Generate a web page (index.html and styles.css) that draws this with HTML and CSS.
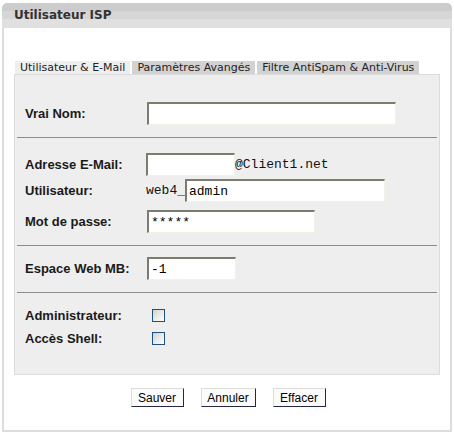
FILE: index.html
```html
<!DOCTYPE html>
<html lang="fr">
<head>
  <meta charset="UTF-8" />
  <title>Utilisateur ISP</title>
  <link rel="stylesheet" href="styles.css">
</head>
<body>
  <div class="box">
    <div class="box-title">Utilisateur ISP</div>
    <div class="box-body">
      <form class="isp-form" onsubmit="return false">
        <!-- Onglets -->
        <ul class="tabs">
          <li class="tab active">Utilisateur &amp; E-Mail</li>
          <li class="tab">Paramètres Avangés</li>
          <li class="tab">Filtre AntiSpam &amp; Anti-Virus</li>
        </ul>

        <div class="tab-panel">
          <div class="section section-name">
            <div class="field">
              <label>Vrai Nom:</label>
              <input type="text" class="in-name">
            </div>
          </div>
          <hr>
          <div class="section section-mail">
            <div class="field">
              <label>Adresse E-Mail:</label>
              <span class="inline"><input type="text" class="in-mail"><span class="mono">@Client1.net</span></span>
            </div>
            <div class="field field-user">
              <label>Utilisateur:</label>
              <span class="inline"><span class="mono">web4_</span><input type="text" class="in-user" value="admin"></span>
            </div>
            <div class="field field-pass">
              <label>Mot de passe:</label>
              <input type="text" class="in-pass" value="*****">
            </div>
          </div>
          <hr>
          <div class="section section-web">
            <div class="field">
              <label>Espace Web MB:</label>
              <input type="text" class="in-web" value="-1">
            </div>
          </div>
          <hr>
          <div class="section section-flags">
            <div class="field">
              <label>Administrateur:</label>
              <input type="checkbox" class="check">
            </div>
            <div class="field">
              <label>Accès Shell:</label>
              <input type="checkbox" class="check">
            </div>
          </div>
        </div>

        <div class="actions">
          <button class="btn btn-save">Sauver</button>
          <button class="btn btn-cancel">Annuler</button>
          <button class="btn btn-clear">Effacer</button>
        </div>
      </form>
    </div>
  </div>
</body>
</html>
```

FILE: styles.css
```css
* {
  box-sizing: border-box;
}

body {
  margin: 0;
  background: #fff;
  font-family: 'Liberation Sans', Arial, sans-serif;
  color: #222;
}

.box {
  width: 450px;
  margin: 3px 0 0 2px;
}

/* Title bar */
.box-title {
  height: 25px;
  padding: 6px 0 0 12px;
  border-radius: 5px 5px 0 0;
  background: linear-gradient(to bottom, #cccccc 0, #cccccc 8px, #d6d6d6 8px, #d6d6d6 16px, #e0e0e0 16px);
  font-family: 'DejaVu Sans', Verdana, sans-serif;
  font-size: 12px;
  font-weight: bold;
  line-height: 13px;
  color: #333;
}

.box-body {
  height: 404px;
  border: 2px solid #dddddd;
  border-top: none;
  padding: 33px 10px 0 10px;
}

/* Tabs */
.tabs {
  list-style: none;
  margin: 0 0 0 1px;
  padding: 0;
  display: flex;
  gap: 2px;
}

.tab {
  height: 13px;
  padding: 0 5px;
  background: #d2d2d2;
  font-family: 'DejaVu Sans', Verdana, sans-serif;
  font-size: 11px;
  line-height: 14px;
  color: #222;
}

.tab.active {
  background: #eeeeee;
}

.tab-panel {
  width: 426px;
  background: #eeeeee;
  border: 1px solid #dcdcdc;
}

.tab-panel hr {
  margin: 0 2px;
  border: none;
  border-top: 1px solid #8c8c8c;
  height: 0;
}

/* Form rows */
.section {
  padding-left: 10px;
}

.section-name { padding-top: 27px; padding-bottom: 12px; }
.section-mail { padding-top: 15px; padding-bottom: 12px; }
.section-web { padding-top: 11px; padding-bottom: 12px; }
.section-flags { padding-top: 11px; padding-bottom: 24px; }

.field {
  display: flex;
  align-items: center;
  height: 23px;
}

.section-mail .field-user {
  margin-top: 3px;
}

.section-mail .field-pass {
  margin-top: 8px;
}

.field label {
  width: 122px;
  font-size: 13px;
  font-weight: bold;
  color: #1a1a1a;
}

.inline {
  display: flex;
  align-items: center;
  margin-left: -1px;
}

.mono {
  font-family: 'Liberation Mono', 'Courier New', monospace;
  font-size: 13px;
  color: #111;
}

input[type="text"] {
  height: 23px;
  margin: 0;
  padding: 0 2px;
  border-style: solid;
  border-width: 2px 1px 1px 2px;
  border-color: #7b7b70 #f1f1e6 #f1f1e6 #7b7b70;
  background: #fff;
  font-family: 'Liberation Mono', 'Courier New', monospace;
  font-size: 13px;
  color: #000;
  outline: none;
}

.in-name { width: 249px; margin-left: 1px; }
.in-mail { width: 89px; }
.in-user { width: 200px; }
.in-pass { width: 168px; margin-left: 1px; }
.in-web { width: 89px; }

.check {
  appearance: none;
  -webkit-appearance: none;
  width: 13px;
  height: 13px;
  margin: 0 0 0 5px;
  border: 1px solid #1c5180;
  background: linear-gradient(135deg, #d4d4cc, #ffffff);
}

/* Buttons */
.actions {
  display: flex;
  justify-content: center;
  gap: 17px;
  margin-top: 13px;
  padding-left: 2px;
}

.btn {
  height: 19px;
  padding: 0;
  border: 1px solid;
  border-color: #dddddd #262645 #262645 #dddddd;
  background: #fbfbfb;
  font-family: 'Liberation Sans', Arial, sans-serif;
  font-size: 12px;
  color: #000;
  cursor: pointer;
}

.btn-save { width: 53px; }
.btn-cancel { width: 55px; }
.btn-clear { width: 53px; }
```
